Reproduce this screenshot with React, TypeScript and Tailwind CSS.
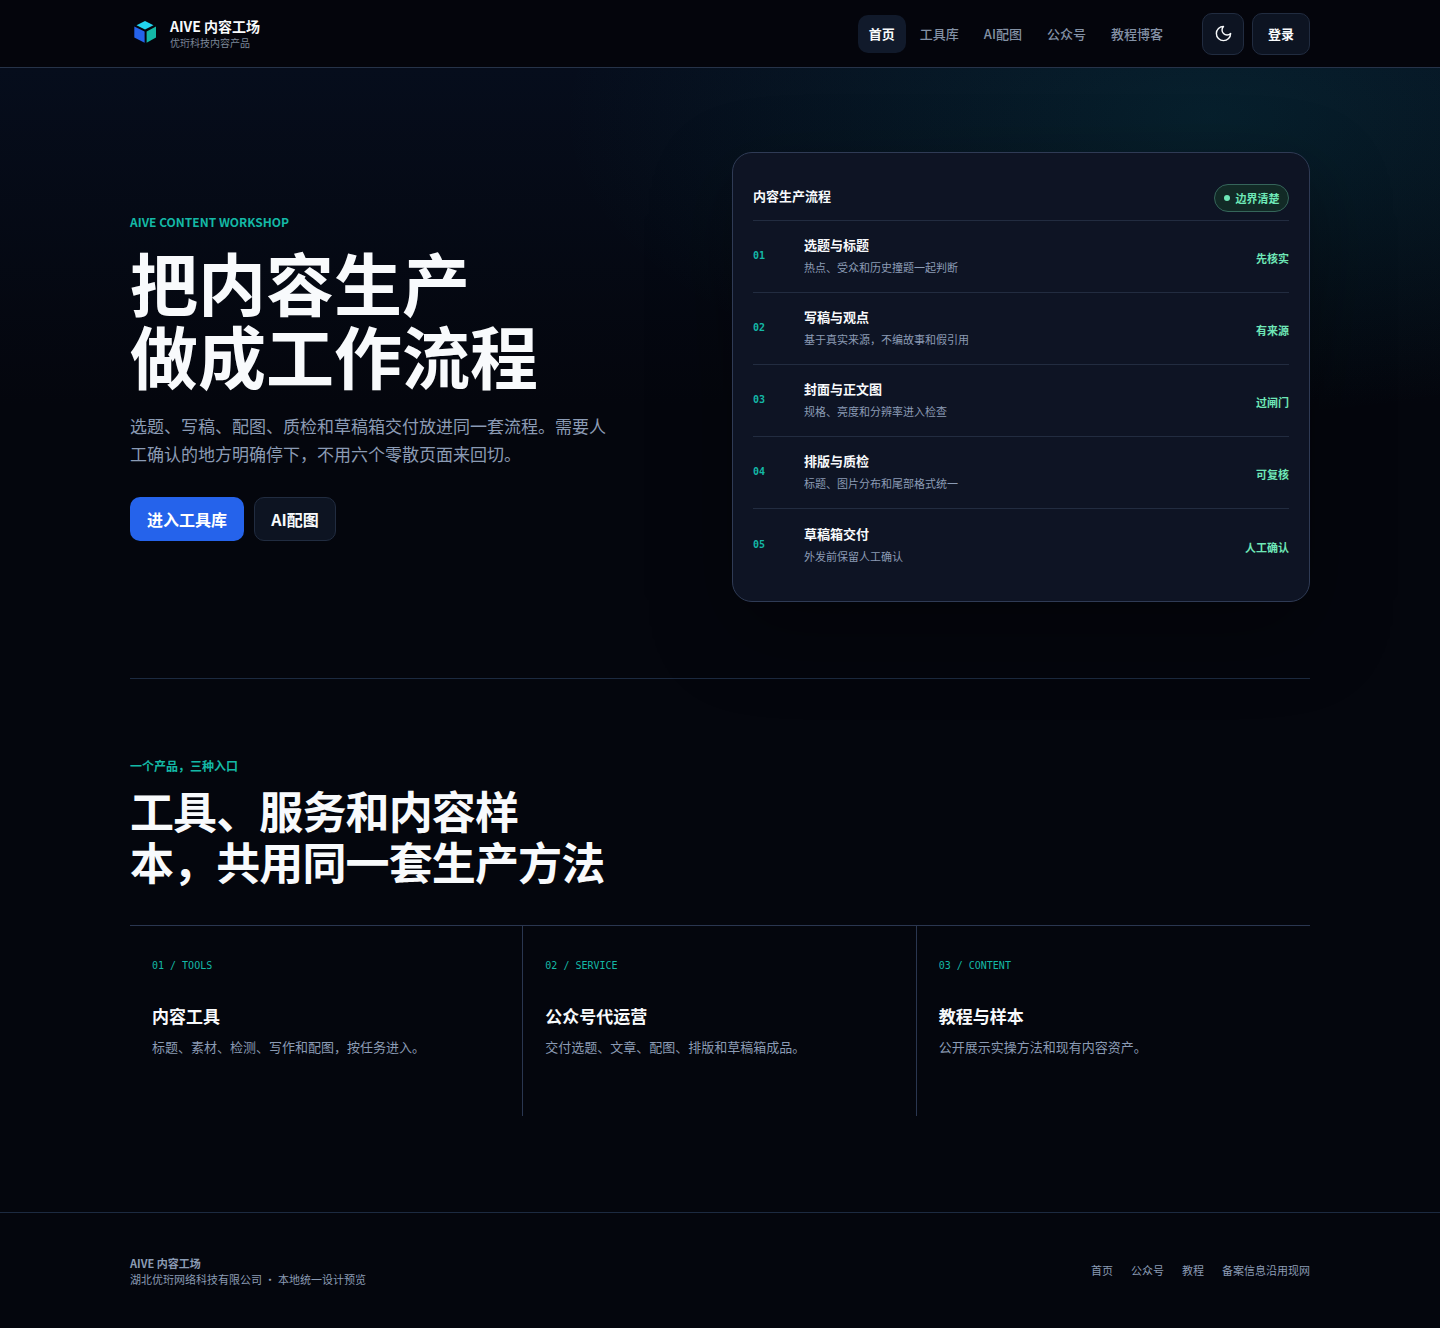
const NAV = ['工具库', 'AI配图', '公众号', '教程博客'];

const STEPS = [
    { no: '01', title: '选题与标题', desc: '热点、受众和历史撞题一起判断', tag: '先核实' },
    { no: '02', title: '写稿与观点', desc: '基于真实来源，不编故事和假引用', tag: '有来源' },
    { no: '03', title: '封面与正文图', desc: '规格、亮度和分辨率进入检查', tag: '过闸门' },
    { no: '04', title: '排版与质检', desc: '标题、图片分布和尾部格式统一', tag: '可复核' },
    { no: '05', title: '草稿箱交付', desc: '外发前保留人工确认', tag: '人工确认' },
];

const ENTRIES = [
    { label: '01 / TOOLS', title: '内容工具', desc: '标题、素材、检测、写作和配图，按任务进入。' },
    { label: '02 / SERVICE', title: '公众号代运营', desc: '交付选题、文章、配图、排版和草稿箱成品。' },
    { label: '03 / CONTENT', title: '教程与样本', desc: '公开展示实操方法和现有内容资产。' },
];

const FOOTER_LINKS = ['首页', '公众号', '教程', '备案信息沿用现网'];

function Logo() {
    return (
        <svg className="mb-[4px]" width="24" height="24" viewBox="0 0 24 24">
            <path d="M12 1 L20.5 5.2 L12 9.6 L3.5 5.2 Z" fill="#22d3ee" />
            <path d="M1.3 6.4 L11.6 11.6 L11.6 22.8 L1.3 17.4 Z" fill="#2563eb" />
            <path d="M13.6 11.6 L23 6.4 L23 17.4 L13.6 22.8 Z" fill="#14b8a6" />
        </svg>
    );
}

function MoonIcon() {
    return (
        <svg width="19" height="19" viewBox="0 0 24 24" fill="none" stroke="currentColor" strokeWidth="1.8" strokeLinecap="round" strokeLinejoin="round">
            <path d="M12 3a6 6 0 0 0 9 9 9 9 0 1 1-9-9Z" />
        </svg>
    );
}

export default function App() {
    return (
        <div className="min-h-[1328px] bg-[#04060d] text-white font-['Noto_Sans_CJK_SC','Noto_Sans',sans-serif]">
            <header className="h-[68px] border-b border-[#263349] bg-[#04050c]">
                <div className="mx-auto flex h-full w-[1180px] items-center justify-between">
                    <div className="flex items-center gap-[13px] pl-[3px]">
                        <Logo />
                        <div>
                            <div className="text-[14px] font-bold leading-[18px] text-[#f8fafc]">AIVE 内容工场</div>
                            <div className="mt-[1px] text-[10px] leading-[14px] text-[#7c8798]">优珩科技内容产品</div>
                        </div>
                    </div>
                    <div className="flex items-center">
                        <nav className="flex items-center gap-[1px] text-[13px] font-medium text-[#8391a5]">
                            <span className="mr-[1px] flex h-[38px] w-[48px] items-center justify-center rounded-[10px] bg-[#111a2b] font-bold text-[#f8fafc]">首页</span>
                            {NAV.map((item) => (
                                <span key={item} className="flex h-[38px] items-center px-[12px]">{item}</span>
                            ))}
                        </nav>
                        <button className="ml-[27px] flex h-[42px] w-[42px] items-center justify-center rounded-[10px] border border-[#212c40] bg-[#0d1422] text-[#f8fafc]">
                            <MoonIcon />
                        </button>
                        <button className="ml-[8px] flex h-[42px] w-[58px] items-center justify-center rounded-[10px] border border-[#212c40] bg-[#0d1422] text-[13px] font-bold text-[#f8fafc]">登录</button>
                    </div>
                </div>
            </header>

            <div className="bg-[radial-gradient(ellipse_at_84%_8%,rgba(14,165,170,0.13),transparent_38%),linear-gradient(180deg,#060d1c,#04060d_55%)]">
                <section className="mx-auto flex h-[611px] w-[1180px] items-start justify-between border-b border-[#1c2a40]">
                    <div className="w-[480px] pt-[145px]">
                        <div className="text-[12px] font-bold leading-[18px] text-[#14b8a6]">AIVE CONTENT WORKSHOP</div>
                        <h1 className="mt-[14px] whitespace-nowrap text-[68px] font-bold leading-[73.44px] text-[#f8fafc]">
                            把内容生产<br />做成工作流程
                        </h1>
                        <p className="mt-[20px] text-[17px] leading-[28px] text-[#8b9bb4]">选题、写稿、配图、质检和草稿箱交付放进同一套流程。需要人工确认的地方明确停下，不用六个零散页面来回切。</p>
                        <div className="mt-[29px] flex gap-[10px]">
                            <button className="flex h-[44px] w-[114px] items-center justify-center rounded-[10px] bg-[#2563eb] text-[16px] font-bold text-white">进入工具库</button>
                            <button className="flex h-[44px] w-[82px] items-center justify-center rounded-[10px] border border-[#212c40] bg-[#0d1422] text-[16px] font-bold text-[#f8fafc]">AI配图</button>
                        </div>
                    </div>
                    <div className="mt-[84px] h-[450px] w-[578px] rounded-[20px] border border-[#2f3b55] bg-[#0e1424] px-[20px] pt-[30px] shadow-[0_30px_80px_rgba(0,0,0,0.35)]">
                        <div className="flex h-[38px] items-start justify-between border-b border-[#222c40]">
                            <span className="text-[13px] font-bold leading-[26px] text-[#f8fafc]">内容生产流程</span>
                            <span className="mt-[1px] flex h-[28px] w-[75px] items-center justify-center gap-[6px] rounded-full border border-[#35655a] bg-[#122a26] text-[11px] font-bold text-[#6ee7b7]">
                                <span className="h-[6px] w-[6px] rounded-full bg-[#6ee7b7]" />
                                边界清楚
                            </span>
                        </div>
                        {STEPS.map((step, i) => (
                            <div key={step.no} className={`flex h-[72px] items-center justify-between ${i < 4 ? 'border-b border-[#222c40]' : ''}`}>
                                <div className="flex items-center">
                                    <span className="w-[51px] pb-[2px] font-['DejaVu_Sans_Mono',monospace] text-[10px] font-bold text-[#14b8a6]">{step.no}</span>
                                    <div className="pb-[2px]">
                                        <div className="text-[13px] font-bold leading-[20px] text-[#f8fafc]">{step.title}</div>
                                        <div className="mt-[3px] text-[11px] leading-[18px] text-[#8b9bb4]">{step.desc}</div>
                                    </div>
                                </div>
                                <span className="pt-[4px] text-[11px] font-bold text-[#6ee7b7]">{step.tag}</span>
                            </div>
                        ))}
                    </div>
                </section>
            </div>

            <section className="mx-auto w-[1180px] pt-[77px]">
                <div className="text-[12px] font-bold leading-[20px] text-[#14b8a6]">一个产品，三种入口</div>
                <h2 className="mt-[9px] whitespace-nowrap text-[44px] font-bold leading-[51px] tracking-[-0.02em] text-[#f8fafc]">
                    工具、服务和内容样<br />本，共用同一套生产方法
                </h2>
                <div className="mt-[38px] grid h-[191px] grid-cols-3 border-t border-[#2a3650]">
                    {ENTRIES.map((entry, i) => (
                        <div key={entry.label} className={`px-[22px] pt-[32px] ${i < 2 ? 'border-r border-[#2a3650]' : ''}`}>
                            <div className="font-['DejaVu_Sans_Mono',monospace] text-[10px] leading-[16px] text-[#14b8a6]">{entry.label}</div>
                            <div className="mt-[30px] text-[17px] font-bold leading-[24px] text-[#f8fafc]">{entry.title}</div>
                            <div className="mt-[8px] text-[13px] leading-[22px] text-[#8b9bb4]">{entry.desc}</div>
                        </div>
                    ))}
                </div>
            </section>

            <footer className="mt-[96px] h-[116px] border-t border-[#1c2a40]">
                <div className="mx-auto flex h-full w-[1180px] items-center justify-between">
                    <div className="text-[11px] leading-[16px] text-[#8b9bb4]">
                        <div className="font-bold">AIVE 内容工场</div>
                        <div>湖北优珩网络科技有限公司 · 本地统一设计预览</div>
                    </div>
                    <div className="flex gap-[18px] text-[11px] text-[#8b9bb4]">
                        {FOOTER_LINKS.map((link) => (
                            <span key={link}>{link}</span>
                        ))}
                    </div>
                </div>
            </footer>
        </div>
    );
}
